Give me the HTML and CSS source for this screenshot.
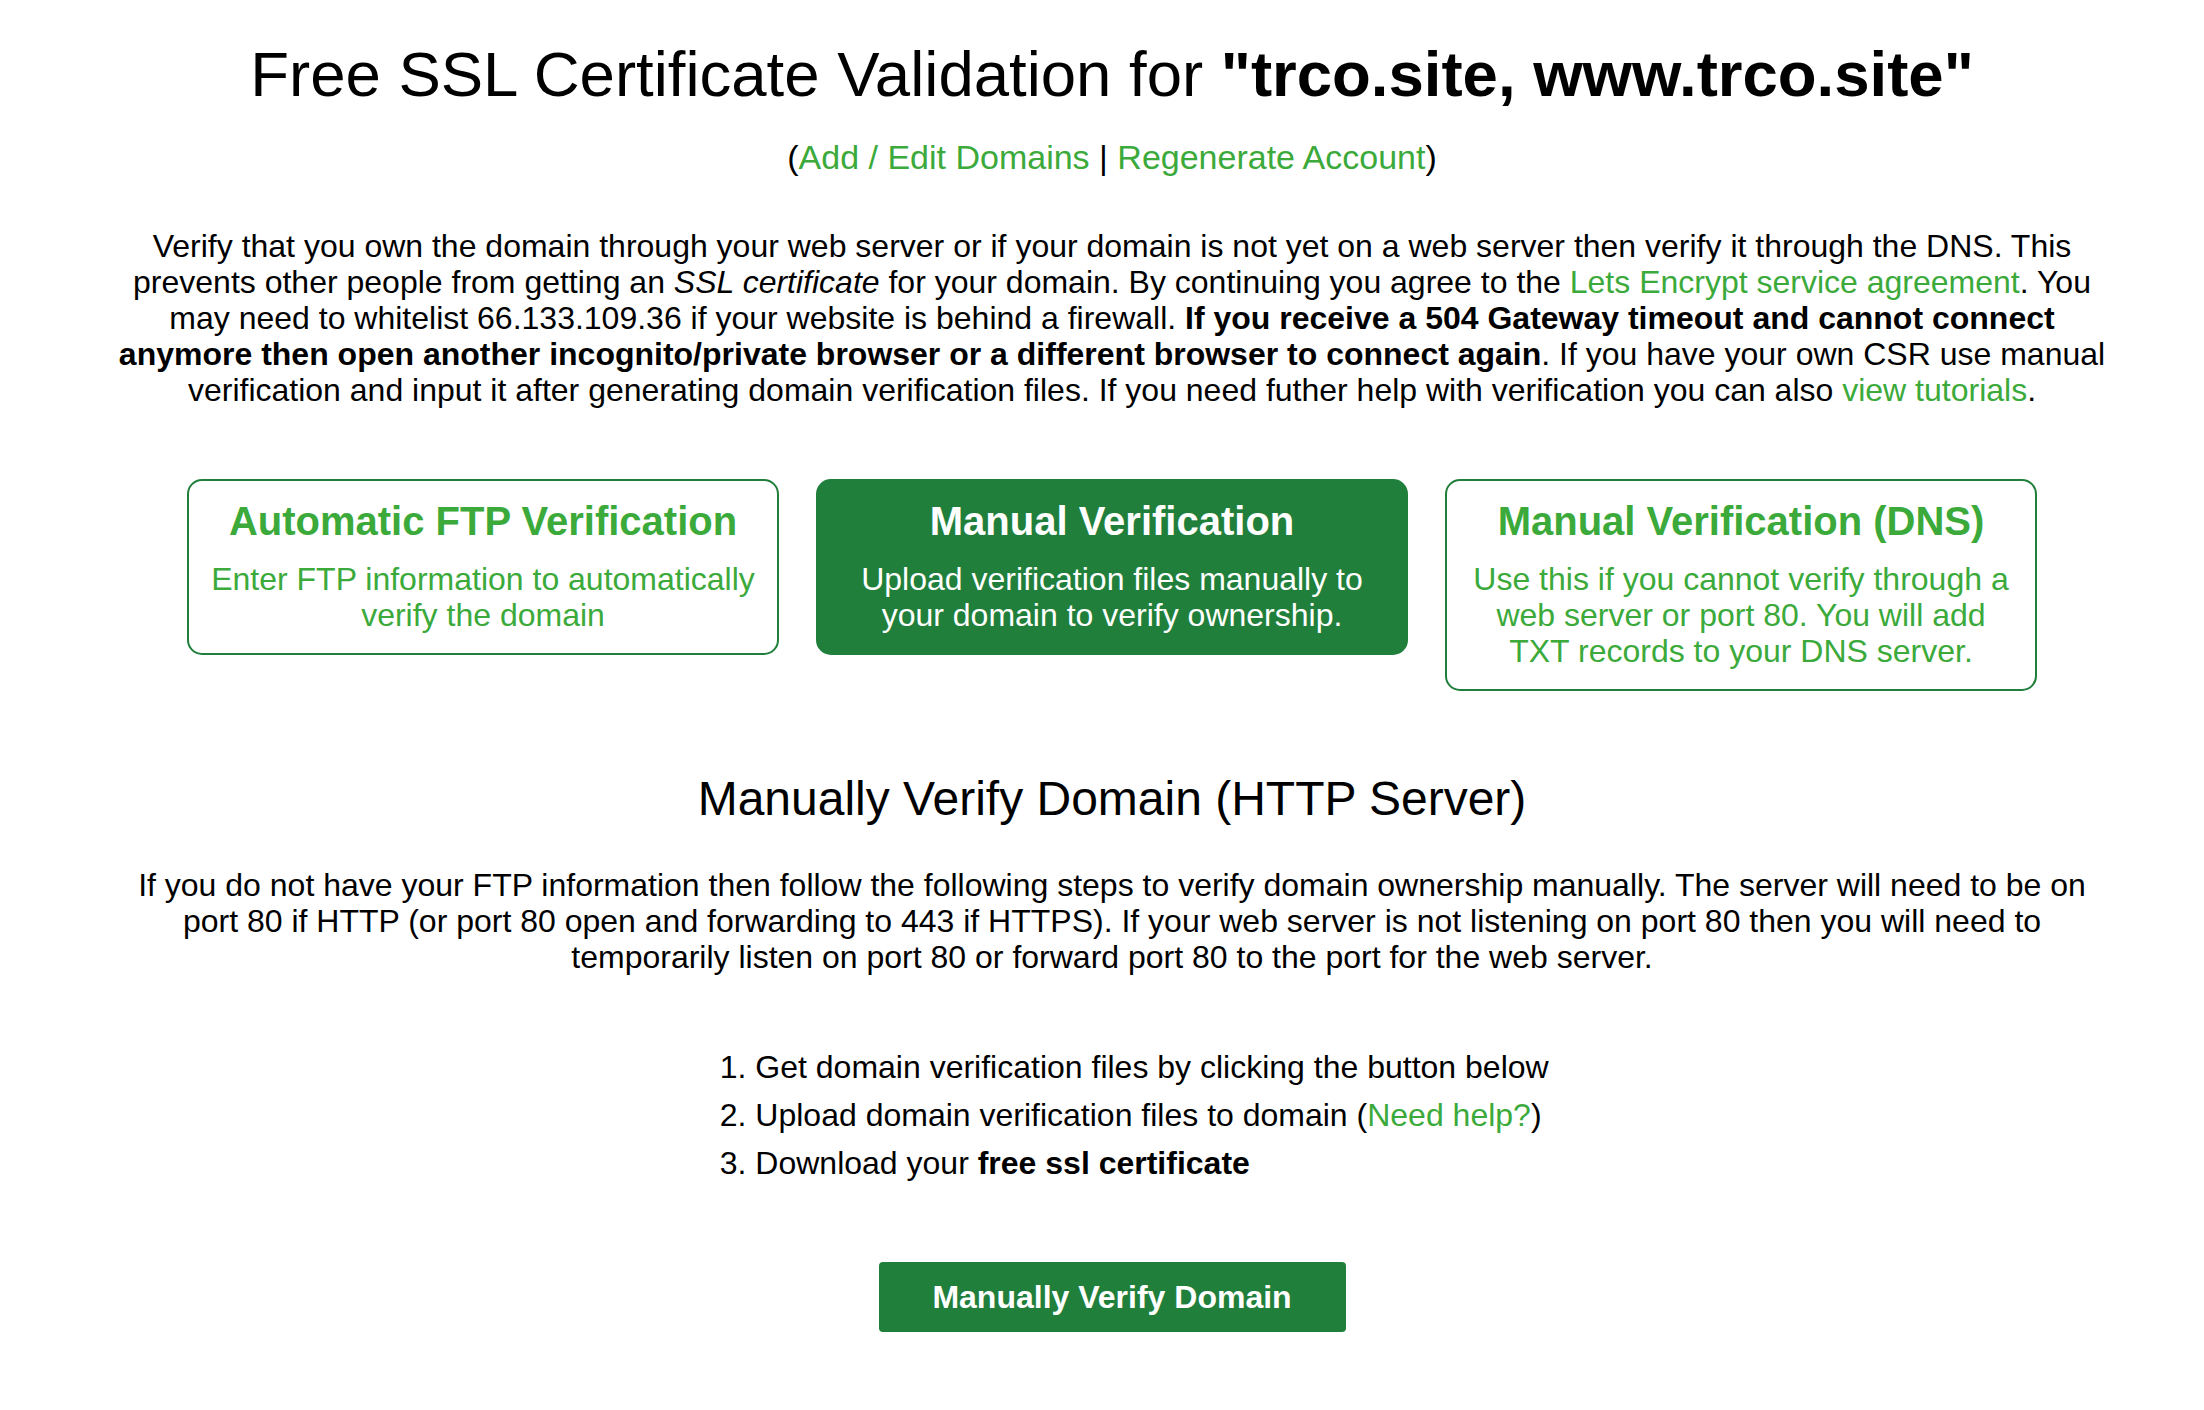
FILE: index.html
```html
<!DOCTYPE html>
<html lang="en">
<head>
<meta charset="utf-8">
<title>Free SSL Certificate Validation</title>
<link rel="stylesheet" href="styles.css">
</head>
<body>
<div class="page">
  <h1 class="title">Free SSL Certificate Validation for <b>"trco.site, www.trco.site"</b></h1>
  <p class="links">(<a href="#">Add / Edit Domains</a> | <a href="#">Regenerate Account</a>)</p>
  <p class="intro">Verify that you own the domain through your web server or if your domain is not yet on a web server then verify it through the DNS. This prevents other people from getting an <i>SSL certificate</i> for your domain. By continuing you agree to the <a href="#">Lets Encrypt service agreement</a>. You may need to whitelist 66.133.109.36 if your website is behind a firewall. <b>If you receive a 504 Gateway timeout and cannot connect anymore then open another incognito/private browser or a different browser to connect again</b>. If you have your own CSR use manual verification and input it after generating domain verification files. If you need futher help with verification you can also <a href="#">view tutorials</a>.</p>

  <div class="options">
    <div class="option">
      <div class="option-title">Automatic FTP Verification</div>
      <div class="option-desc">Enter FTP information to automatically verify the domain</div>
    </div>
    <div class="option active">
      <div class="option-title">Manual Verification</div>
      <div class="option-desc">Upload verification files manually to your domain to verify ownership.</div>
    </div>
    <div class="option">
      <div class="option-title">Manual Verification (DNS)</div>
      <div class="option-desc">Use this if you cannot verify through a web server or port 80. You will add TXT records to your DNS server.</div>
    </div>
  </div>

  <h2 class="section-title">Manually Verify Domain (HTTP Server)</h2>
  <p class="section-text">If you do not have your FTP information then follow the following steps to verify domain ownership manually. The server will need to be on port 80 if HTTP (or port 80 open and forwarding to 443 if HTTPS). If your web server is not listening on port 80 then you will need to temporarily listen on port 80 or forward port 80 to the port for the web server.</p>

  <div class="steps-wrap">
    <ol class="steps">
      <li>Get domain verification files by clicking the button below</li>
      <li>Upload domain verification files to domain (<a href="#">Need help?</a>)</li>
      <li>Download your <b>free ssl certificate</b></li>
    </ol>
  </div>

  <div class="actions">
    <button class="btn" type="button">Manually Verify Domain</button>
  </div>
</div>
</body>
</html>
```
FILE: styles.css
```css
html, body {
  margin: 0;
  padding: 0;
  background: #ffffff;
}

body {
  font-family: "Liberation Sans", Arial, Helvetica, sans-serif;
  font-size: 32px;
  line-height: 36px;
  color: #000000;
}

a {
  color: #3baa3b;
  text-decoration: none;
}

.page {
  width: 2000px;
  margin: 0 auto;
  padding-left: 20px;
  text-align: center;
}

.title {
  margin: 38px 0 0;
  font-size: 63.5px;
  line-height: 72px;
  font-weight: normal;
}

.title b {
  font-weight: bold;
}

.links {
  margin: 28px 0 0;
  font-size: 34px;
  line-height: 38px;
}

.intro {
  margin: 52px 0 0;
}

.options {
  display: flex;
  justify-content: center;
  align-items: flex-start;
  gap: 37px;
  margin-top: 71px;
}

.option {
  box-sizing: border-box;
  width: 592px;
  border: 2px solid #217f3c;
  border-radius: 15px;
  padding: 17px 20px 20px;
  color: #3baa3b;
  background: #ffffff;
}

.option.active {
  background: #217f3c;
  color: #ffffff;
}

.option-title {
  font-size: 40px;
  line-height: 46px;
  font-weight: bold;
}

.option-desc {
  margin-top: 17px;
}

.section-title {
  margin: 80px 0 0;
  font-size: 48px;
  line-height: 56px;
  font-weight: normal;
}

.section-text {
  margin: 40px 0 0;
}

.steps-wrap {
  margin-top: 68px;
}

.steps {
  display: inline-block;
  margin: 0;
  padding-left: 80px;
  text-align: left;
  line-height: 48px;
}

.actions {
  margin-top: 75px;
}

.btn {
  font-family: "Liberation Sans", Arial, Helvetica, sans-serif;
  font-size: 32px;
  line-height: 36px;
  font-weight: bold;
  color: #ffffff;
  background: #217f3c;
  border: none;
  border-radius: 4px;
  padding: 17px 53px;
  width: 467px;
  cursor: pointer;
}
```
